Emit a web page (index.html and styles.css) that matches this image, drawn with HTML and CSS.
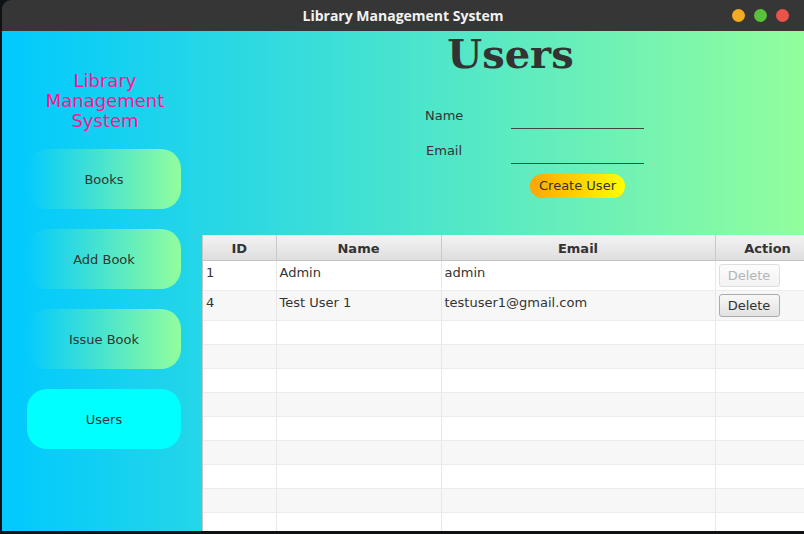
FILE: index.html
```html
<!DOCTYPE html>
<html>
<head>
<meta charset="utf-8">
<link rel="stylesheet" href="styles.css">
</head>
<body>
<div class="window">
  <div class="titlebar">
    <span class="title">Library Management System</span>
    <div class="controls">
      <span class="dot dot-min"></span>
      <span class="dot dot-max"></span>
      <span class="dot dot-close"></span>
    </div>
  </div>
  <div class="content">
    <aside class="sidebar">
      <div class="brand">Library<br>Management<br>System</div>
      <nav class="nav">
        <div class="nav-btn">Books</div>
        <div class="nav-btn">Add Book</div>
        <div class="nav-btn">Issue Book</div>
        <div class="nav-btn active">Users</div>
      </nav>
    </aside>
    <main class="main">
      <h1 class="heading">Users</h1>
      <div class="form">
        <label class="lbl">Name</label>
        <div class="field"></div>
        <label class="lbl">Email</label>
        <div class="field"></div>
        <div></div>
        <div class="create-wrap"><span class="create-btn">Create User</span></div>
      </div>
      <div class="table-wrap">
        <table class="tbl">
          <colgroup>
            <col class="c-id"><col class="c-name"><col class="c-email"><col class="c-action">
          </colgroup>
          <thead>
            <tr><th>ID</th><th>Name</th><th>Email</th><th>Action</th></tr>
          </thead>
          <tbody>
            <tr class="data"><td>1</td><td>Admin</td><td>admin</td><td><span class="del disabled">Delete</span></td></tr>
            <tr class="data"><td>4</td><td>Test User 1</td><td>testuser1@gmail.com</td><td><span class="del">Delete</span></td></tr>
            <tr class="empty"><td></td><td></td><td></td><td></td></tr>
            <tr class="empty"><td></td><td></td><td></td><td></td></tr>
            <tr class="empty"><td></td><td></td><td></td><td></td></tr>
            <tr class="empty"><td></td><td></td><td></td><td></td></tr>
            <tr class="empty"><td></td><td></td><td></td><td></td></tr>
            <tr class="empty"><td></td><td></td><td></td><td></td></tr>
            <tr class="empty"><td></td><td></td><td></td><td></td></tr>
            <tr class="empty"><td></td><td></td><td></td><td></td></tr>
            <tr class="empty"><td></td><td></td><td></td><td></td></tr>
          </tbody>
        </table>
      </div>
    </main>
  </div>
</div>
</body>
</html>
```
FILE: styles.css
```css
html, body {
  margin: 0;
  padding: 0;
  background: #0f1214;
  overflow: hidden;
  width: 804px;
  height: 534px;
}
.window {
  margin-left: 2px;
  width: 820px;
  height: 531px;
  display: flex;
  flex-direction: column;
  overflow: hidden;
  border-radius: 9px 9px 0 0;
}
.titlebar {
  height: 31px;
  flex: none;
  background: #363636;
  display: flex;
  align-items: center;
  justify-content: center;
  position: relative;
}
.title {
  color: #f2f2f2;
  font-family: "Open Sans", "DejaVu Sans", sans-serif;
  font-weight: 700;
  font-size: 14px;
  margin-left: -18px;
}
.controls {
  position: absolute;
  left: 730px;
  top: 9px;
  display: flex;
  gap: 9px;
}
.dot {
  width: 13px;
  height: 13px;
  border-radius: 50%;
  display: block;
}
.dot-min { background: #f4aa22; }
.dot-max { background: #58c23a; }
.dot-close { background: #ea524a; }
.content {
  flex: 1;
  display: flex;
  background: linear-gradient(to right, #00c9ff 0px, #92fe9d 802px);
  font-family: "DejaVu Sans", sans-serif;
  color: #333;
  overflow: hidden;
}
.sidebar {
  width: 200px;
  flex: none;
  display: flex;
  flex-direction: column;
  padding-top: 40px;
  box-sizing: border-box;
}
.brand {
  color: #ff148f;
  font-size: 18px;
  line-height: 20px;
  text-align: center;
  padding-left: 6px;
}
.nav {
  display: flex;
  flex-direction: column;
  gap: 20px;
  padding-left: 25px;
  margin-top: 18px;
}
.nav-btn {
  width: 154px;
  height: 60px;
  display: flex;
  align-items: center;
  justify-content: center;
  font-size: 13px;
  color: #333;
  border-radius: 20px;
  background: linear-gradient(to right, #04cbfd, #92fe9d);
}
.nav-btn.active {
  background: #00ffff;
}
.main {
  flex: 1;
  display: flex;
  flex-direction: column;
  min-width: 0;
}
.heading {
  margin: 0;
  height: 51px;
  font-family: "DejaVu Serif", serif;
  font-weight: 700;
  font-size: 40px;
  line-height: 46px;
  text-align: center;
  color: #333;
  padding-right: 3px;
}
.form {
  display: grid;
  grid-template-columns: 86px 133px;
  grid-template-rows: 25px 35px 34px;
  row-gap: 0;
  padding-left: 223px;
  margin-top: 22px;
}
.lbl {
  font-size: 13px;
  color: #333;
  align-self: end;
  padding-bottom: 6px;
}
.form .lbl:nth-of-type(2) { padding-left: 1px; }
.field {
  border-bottom: 1px solid #444;
}
.create-wrap {
  display: flex;
  justify-content: center;
  align-items: flex-end;
}
.create-btn {
  display: inline-block;
  height: 24px;
  line-height: 24px;
  padding: 0 9px;
  border-radius: 12px;
  font-size: 13px;
  color: #333;
  background: linear-gradient(to right, #ffa500, #ffff00);
}
.table-wrap {
  margin-top: 37px;
  flex: 1;
  overflow: hidden;
  background: #fff;
  border-left: 1px solid #c6c6c6;
}
.tbl {
  border-collapse: collapse;
  table-layout: fixed;
  width: 617px;
  font-size: 13px;
}
.c-id { width: 73px; }
.c-name { width: 165px; }
.c-email { width: 274px; }
.c-action { width: 105px; }
.tbl th {
  height: 23px;
  padding: 2px 0 0 0;
  font-weight: 700;
  color: #333;
  background: linear-gradient(to bottom, #f3f3f3, #dedede);
  border-right: 1px solid #c9c9c9;
  border-bottom: 1px solid #c2c2c2;
  text-align: center;
}
.tbl td {
  padding: 4px 3px 0 3px;
  vertical-align: top;
  line-height: 16px;
  border-right: 1px solid #e8e8e8;
  border-bottom: 1px solid #ececec;
  color: #333;
  white-space: nowrap;
  overflow: hidden;
}
.tbl tbody tr:nth-child(even) td { background: #f7f7f7; }
.tbl tr.data td { height: 25px; }
.tbl tr.empty td { height: 19px; }
.del {
  display: inline-block;
  width: 59px;
  height: 21px;
  line-height: 21px;
  text-align: center;
  border: 1px solid #ababab;
  border-radius: 3px;
  background: linear-gradient(to bottom, #f8f8f8, #e2e2e2);
  color: #333;
  margin-top: -1px;
}
.del.disabled {
  color: #b5b5b5;
  border-color: #dedede;
  background: linear-gradient(to bottom, #fcfcfc, #f3f3f3);
}
```
